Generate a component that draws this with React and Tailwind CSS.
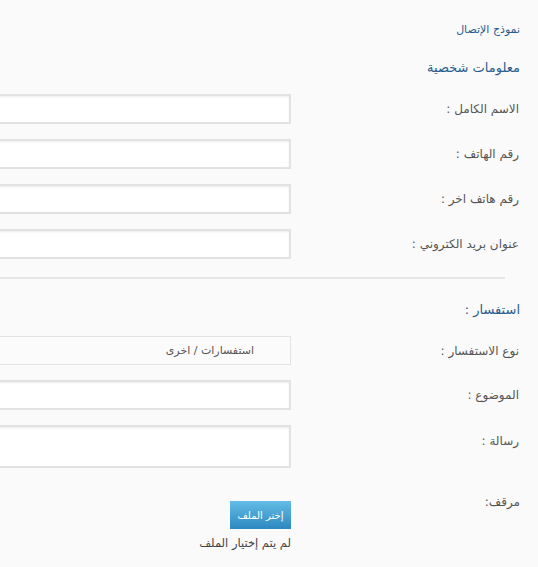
import React from 'react';

const font = { fontFamily: '"DejaVu Sans", Tahoma, sans-serif' };

function Field({ label, children, top = 'pt-[7px]' }) {
  return (
    <div className="flex items-start">
      <div className={`w-[229px] shrink-0 pr-[1px] text-[12px] leading-4 text-[#555] ${top}`}>{label}</div>
      {children}
    </div>
  );
}

function TextInput({ h = 'h-[30px]' }) {
  return (
    <div
      className={`w-[420px] shrink-0 ${h} bg-white border-2 border-[#e2e2e2] shadow-[inset_0_1px_2px_rgba(0,0,0,0.08)]`}
    />
  );
}

export default function App() {
  return (
    <div dir="rtl" style={font} className="h-[567px] w-[538px] overflow-hidden bg-[#fafafa]">
      <div className="pr-[18px] pt-[22px]">
        <div className="text-[11px] leading-4 text-[#2a5d8f]">نموذج الإتصال</div>
        <div className="mt-[22px] text-[13px] leading-4 text-[#2a5d8f]">معلومات شخصية</div>

        <div className="mt-[18px] flex flex-col gap-[15px]">
          <Field label="الاسم الكامل :"><TextInput /></Field>
          <Field label="رقم الهاتف :"><TextInput /></Field>
          <Field label="رقم هاتف اخر :"><TextInput /></Field>
          <Field label="عنوان بريد الكتروني :"><TextInput /></Field>
        </div>
      </div>

      <div className="mt-[18px] ml-0 mr-[33px] border-t-2 border-[#e6e6e6]" />

      <div className="pr-[18px]">
        <div className="mt-[23px] text-[13px] leading-4 text-[#2a5d8f]">استفسار :</div>

        <div className="mt-[18px] flex flex-col gap-[15px]">
          <Field label="نوع الاستفسار :">
            <div className="w-[420px] shrink-0 h-[29px] border border-[#e3e3e3] bg-[#fbfbfb] pr-[36px] text-[11px] leading-[27px] text-[#555]">
              استفسارات / اخرى
            </div>
          </Field>
          <Field label="الموضوع :"><TextInput /></Field>
          <Field label="رسالة :" top="pt-[8px]"><TextInput h="h-[43px]" /></Field>
        </div>

        <div className="mt-[30px] flex items-start">
          <div className="w-[229px] shrink-0 -mt-[4px] text-[12px] leading-4 text-[#555]">مرقف:</div>
          <div className="flex flex-col items-start">
            <button className="mt-[3px] h-[28px] w-[61px] bg-gradient-to-b from-[#63bde6] to-[#2b88bf] text-[10px] text-white">
              إختر الملف
            </button>
            <div className="mt-[6px] text-[11.5px] leading-4 text-[#444]">لم يتم إختيار الملف</div>
          </div>
        </div>
      </div>
    </div>
  );
}
